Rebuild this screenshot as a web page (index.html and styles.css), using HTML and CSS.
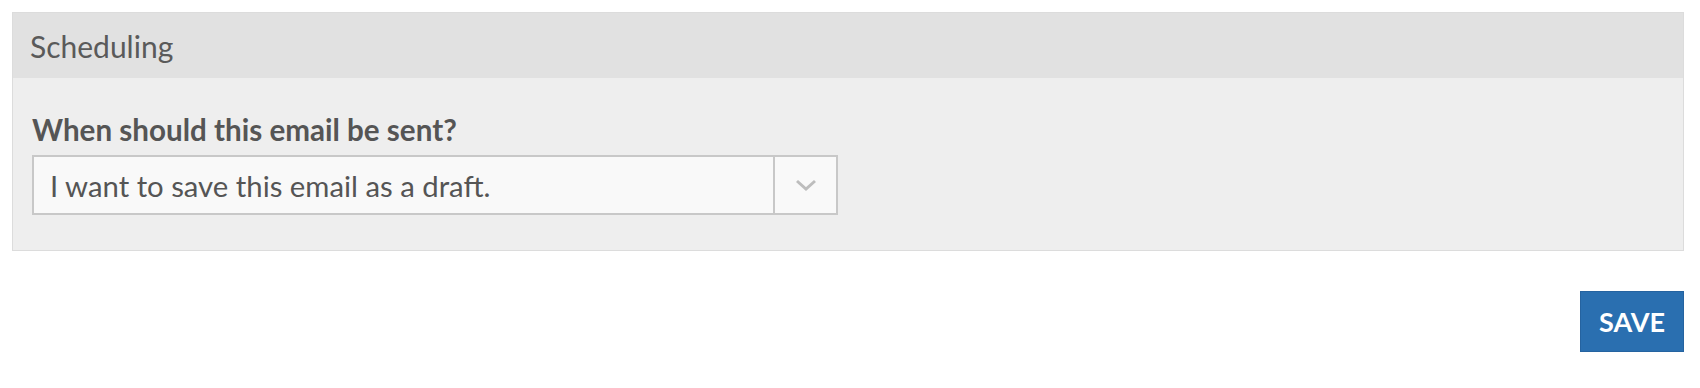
FILE: index.html
```html
<!DOCTYPE html>
<html>
<head>
<meta charset="utf-8">
<link rel="stylesheet" href="styles.css">
</head>
<body>
<div class="page">
  <section class="panel">
    <header class="panel-head">Scheduling</header>
    <div class="panel-body">
      <label class="field-label">When should this email be sent?</label>
      <div class="select">
        <div class="select-value">I want to save this email as a draft.</div>
        <div class="select-arrow">
          <svg width="22" height="12" viewBox="0 0 22 12"><path d="M2 2 L11 10 L20 2" fill="none" stroke="#bdbdbd" stroke-width="3"/></svg>
        </div>
      </div>
    </div>
  </section>
  <div class="actions">
    <button class="btn-save">SAVE</button>
  </div>
</div>
</body>
</html>
```
FILE: styles.css
```css
html, body {
  margin: 0;
  padding: 0;
  background: #fff;
}
body {
  font-family: Lato, "Open Sans", sans-serif;
  color: #555;
}
.page {
  padding: 12px 16px 0 12px;
}
.panel {
  border: 1px solid #dcdcdc;
  background: #eeeeee;
}
.panel-head {
  height: 65px;
  background: #e1e1e1;
  display: flex;
  align-items: center;
  padding-left: 17px;
  font-size: 30px;
  color: #5a5a5a;
}
.panel-body {
  padding: 35px 19px 35px 19px;
}
.field-label {
  display: block;
  font-weight: 700;
  font-size: 29.6px;
  line-height: 33px;
  color: #555;
  margin-bottom: 9px;
}
.select {
  display: flex;
  width: 806px;
  height: 60px;
  box-sizing: border-box;
  border: 2px solid #c8c8c8;
  background: #f9f9f9;
}
.select-value {
  flex: 1;
  display: flex;
  align-items: center;
  padding-left: 16px;
  font-size: 29.3px;
  color: #555;
}
.select-arrow {
  width: 61px;
  border-left: 2px solid #c8c8c8;
  display: flex;
  align-items: center;
  justify-content: center;
}
.actions {
  display: flex;
  justify-content: flex-end;
  padding-top: 40px;
}
.btn-save {
  width: 104px;
  height: 61px;
  background: #2a6fb0;
  border: 1px solid #2563a0;
  color: #fff;
  font-family: Lato, sans-serif;
  font-weight: 700;
  font-size: 27px;
  padding: 0;
}
```
